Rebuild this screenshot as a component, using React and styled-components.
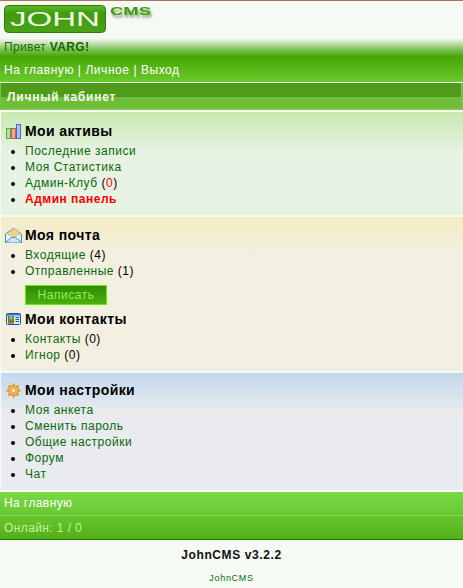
import React from 'react';
import styled, { createGlobalStyle } from 'styled-components';

const GlobalStyle = createGlobalStyle`
  html, body {
    margin: 0;
    padding: 0;
    background: #f5faf5;
  }
  body {
    font-family: "Liberation Sans", Arial, sans-serif;
    font-size: 12px;
    color: #000;
  }
`;

const Logo = () => (
  <svg width="156" height="36" viewBox="0 0 156 36">
    <defs>
      <linearGradient id="logoBg" x1="0" y1="0" x2="0" y2="1">
        <stop offset="0" stopColor="#5fb82a" />
        <stop offset="0.3" stopColor="#3f9c0c" />
        <stop offset="1" stopColor="#4aa314" />
      </linearGradient>
      <filter id="cmsShadow" x="-20%" y="-40%" width="140%" height="220%">
        <feDropShadow dx="1.5" dy="2.5" stdDeviation="1.3" floodColor="#2b5a12" floodOpacity="0.6" />
      </filter>
    </defs>
    <rect x="4.5" y="4.5" width="101" height="27" rx="4" fill="url(#logoBg)" stroke="#2f7d06" />
    <text
      x="10"
      y="25"
      fontFamily="'Liberation Sans', sans-serif"
      fontSize="21"
      fill="#eef8e6"
      textLength="90"
      lengthAdjust="spacingAndGlyphs"
    >
      JOHN
    </text>
    <text
      x="110"
      y="14"
      fontFamily="'Liberation Sans', sans-serif"
      fontSize="11"
      fontWeight="700"
      fill="#3f9c0c"
      filter="url(#cmsShadow)"
      textLength="41"
      lengthAdjust="spacingAndGlyphs"
    >
      CMS
    </text>
  </svg>
);

const ChartIcon = () => (
  <svg width="16" height="15" viewBox="0 0 16 15">
    <rect x="1.500" y="4.500" width="4" height="10" fill="#b8e0a0" stroke="#5aa64a" />
    <rect x="6.500" y="4.500" width="4" height="10" fill="#eda79a" stroke="#c8604a" />
    <rect x="11.500" y="0.500" width="4" height="14" fill="#a9c0ea" stroke="#4a6cc0" />
  </svg>
);

const MailIcon = () => (
  <svg width="17" height="15" viewBox="0 0 17 15">
    <path d="M.5 6 8.500.5 16.500 6v8.500H.5z" fill="#e4f2fb" stroke="#3f8fc8" />
    <path d="M2.500 6 7 1.500c2-.8 4-.5 5.500.5L14.500 6 8.500 10z" fill="#f3d089" stroke="#c9a05a" strokeWidth="0.5" />
    <path d="M.5 14.500 6.500 9.500h4l6 5" fill="#cbe8f8" stroke="#3f8fc8" />
  </svg>
);

const ContactIcon = () => (
  <svg width="15" height="12" viewBox="0 0 15 12">
    <rect x="0.500" y="0.500" width="14" height="11" rx="1" fill="#dbeaf8" stroke="#1f56a0" />
    <rect x="1" y="1" width="13" height="1.500" fill="#2f78c8" />
    <rect x="2" y="3" width="6" height="7.500" fill="#3a9a3a" />
    <circle cx="5" cy="5" r="1.700" fill="#e8a060" />
    <path d="M2.500 10.500c0-2 1-3 2.500-3s2.500 1 2.500 3z" fill="#d85a20" />
    <path d="M9.500 4.500h3.500M9.500 6.500h3.500M9.500 8.500h3.500" stroke="#1f56a0" />
  </svg>
);

const GearIcon = () => (
  <svg width="15" height="15" viewBox="0 0 15 15">
    <g stroke="#e0a238" strokeWidth="2.600">
      <path d="M7.500.5v14M.5 7.500h14M2.500 2.500l10 10M12.500 2.500l-10 10" />
    </g>
    <circle cx="7.500" cy="7.500" r="4.800" fill="#f2bd55" stroke="#d78f28" />
    <circle cx="7.500" cy="7.500" r="2.300" fill="#fbeec8" stroke="#dd9c3a" />
  </svg>
);

const Page = styled.div`
  width: 463px;
  min-height: 588px;
  border-top: 1px solid #a9785a;
  box-sizing: border-box;
  background: #f5faf5;
`;

const Header = styled.header`
  height: 37px;
  overflow: hidden;
`;

const Greeting = styled.div`
  height: 20px;
  padding: 0 4px;
  line-height: 18px;
  font-size: 12px;
  letter-spacing: 0.35px;
  color: #1c6b0a;
  background: linear-gradient(#f5faf5 0, #d9edcf 3px, #7bbf50 12px, #48a808 18px);

  b {
    color: #176508;
  }
`;

const NavBar = styled.nav`
  height: 24px;
  padding: 0 4px;
  line-height: 25px;
  font-size: 12px;
  letter-spacing: 0.55px;
  color: #fff;
  background: linear-gradient(#48a808, #6ccb2c);
`;

const TitleBar = styled.div`
  margin-top: 1px;
  height: 27px;
  box-sizing: border-box;
  padding-left: 6px;
  line-height: 28px;
  font-weight: 700;
  font-size: 12px;
  letter-spacing: 0.8px;
  color: #f4fbef;
  border-left: 1px solid #7dbd58;
  border-right: 2px solid #7dbd58;
  border-bottom: 2px solid #7cc94a;
  background: linear-gradient(#4f9c1a 0, #4f9c1a 14px, #6fbe3a 14px, #6fbe3a 100%);
`;

const Card = styled.section`
  margin: 2px 0 0 1px;
  height: ${props => props.$height}px;
  box-sizing: border-box;
  padding-top: ${props => props.$pad}px;
  background: linear-gradient(${props => props.$from} 0, ${props => props.$to} 40px);
`;

const Heading = styled.h3`
  display: flex;
  align-items: center;
  gap: 3px;
  margin: 0;
  padding-left: 3px;
  height: 20px;
  font-size: 14px;
  font-weight: 700;
  letter-spacing: 0.4px;
  color: #000;
`;

const IconSlot = styled.span`
  display: flex;
  justify-content: center;
  flex: none;
  width: 18px;
`;

const List = styled.ul`
  margin: 2px 0 0;
  padding: 0 0 0 24px;
  list-style: disc;
  font-size: 12px;
  line-height: 16px;
  letter-spacing: 0.5px;
`;

const Link = styled.a`
  color: ${props => (props.$danger ? '#ff0000' : '#0a6a0a')};
  font-weight: ${props => (props.$danger ? 700 : 400)};
  text-decoration: none;
`;

const Red = styled.span`
  color: #ff0000;
`;

const ComposeButton = styled.div`
  margin: 6px 0 4px 24px;
  width: 82px;
  height: 20px;
  box-sizing: border-box;
  border: 1px solid #66ee00;
  background: linear-gradient(#2f8c06, #4cae10);
  color: #8af04a;
  text-align: center;
  font-size: 12px;
  line-height: 18px;
  letter-spacing: 0.55px;
`;

const FooterBar = styled.div`
  height: 23px;
  margin-top: ${props => (props.$first ? '2px' : '0')};
  padding: 0 4px;
  font-size: 12px;
  letter-spacing: 0.4px;
  line-height: ${props => (props.$first ? '23px' : '24px')};
  color: ${props => (props.$first ? '#fff' : '#c6efa8')};
  background: ${props =>
    props.$first
      ? 'linear-gradient(#7ada45, #68c832)'
      : 'linear-gradient(#68c72f, #52ae15)'};
  border-top: ${props => (props.$first ? 'none' : '1px solid #82d656')};
  border-bottom: ${props => (props.$first ? 'none' : '1px solid #1a7a08')};
`;

const Copyright = styled.div`
  margin-top: 8px;
  text-align: center;
  font-weight: 700;
  font-size: 12px;
  line-height: 15px;
  letter-spacing: 0.6px;
  color: #111;
`;

const Credit = styled.div`
  margin-top: 9px;
  text-align: center;
  font-size: 9px;
  letter-spacing: 0.7px;
  line-height: 12px;
  color: #0a6a0a;
`;

const App = () => (
  <Page>
    <GlobalStyle />
    <Header>
      <Logo />
    </Header>
    <Greeting>
      Привет <b>VARG!</b>
    </Greeting>
    <NavBar>На главную | Личное | Выход</NavBar>
    <TitleBar>Личный кабинет</TitleBar>

    <Card $from="#c8e8b0" $to="#e8f2e2" $height={103} $pad={9}>
      <Heading>
        <IconSlot><ChartIcon /></IconSlot>
        Мои активы
      </Heading>
      <List>
        <li><Link>Последние записи</Link></li>
        <li><Link>Моя Статистика</Link></li>
        <li><Link>Админ-Клуб</Link> (<Red>0</Red>)</li>
        <li><Link $danger>Админ панель</Link></li>
      </List>
    </Card>

    <Card $from="#f3ecc4" $to="#f3f0e2" $height={154} $pad={8}>
      <Heading>
        <IconSlot><MailIcon /></IconSlot>
        Моя почта
      </Heading>
      <List>
        <li><Link>Входящие</Link> (4)</li>
        <li><Link>Отправленные</Link> (1)</li>
      </List>
      <ComposeButton>Написать</ComposeButton>
      <Heading>
        <IconSlot><ContactIcon /></IconSlot>
        Мои контакты
      </Heading>
      <List>
        <li><Link>Контакты</Link> (0)</li>
        <li><Link>Игнор</Link> (0)</li>
      </List>
    </Card>

    <Card $from="#c3d8ee" $to="#e9ebee" $height={117} $pad={7}>
      <Heading>
        <IconSlot><GearIcon /></IconSlot>
        Мои настройки
      </Heading>
      <List>
        <li><Link>Моя анкета</Link></li>
        <li><Link>Сменить пароль</Link></li>
        <li><Link>Общие настройки</Link></li>
        <li><Link>Форум</Link></li>
        <li><Link>Чат</Link></li>
      </List>
    </Card>

    <FooterBar $first>На главную</FooterBar>
    <FooterBar>Онлайн: 1 / 0</FooterBar>
    <Copyright>JohnCMS v3.2.2</Copyright>
    <Credit>JohnCMS</Credit>
  </Page>
);

export default App;
